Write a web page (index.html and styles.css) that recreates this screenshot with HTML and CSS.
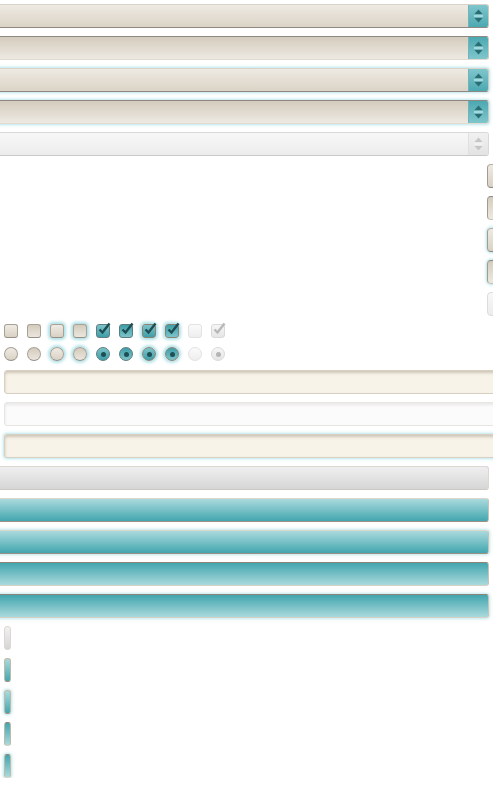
FILE: index.html
```html
<!DOCTYPE html>
<html>
<head>
<meta charset="utf-8">
<link rel="stylesheet" href="styles.css">
</head>
<body>
<div class="page">
  <div class="select"><span class="arrow"><svg width="19" height="22" viewBox="0 0 19 22"><path d="M5.5 9 L9.5 4.5 L13.5 9 Z" /><rect x="5" y="10.5" width="9" height="1" fill="#e9f6f7" stroke="none"/><path d="M5.5 13 L9.5 17.5 L13.5 13 Z"/></svg></span></div>
  <div class="select active"><span class="arrow"><svg width="19" height="22" viewBox="0 0 19 22"><path d="M5.5 9 L9.5 4.5 L13.5 9 Z" /><rect x="5" y="10.5" width="9" height="1" fill="#e9f6f7" stroke="none"/><path d="M5.5 13 L9.5 17.5 L13.5 13 Z"/></svg></span></div>
  <div class="select focus"><span class="arrow"><svg width="19" height="22" viewBox="0 0 19 22"><path d="M5.5 9 L9.5 4.5 L13.5 9 Z" /><rect x="5" y="10.5" width="9" height="1" fill="#e9f6f7" stroke="none"/><path d="M5.5 13 L9.5 17.5 L13.5 13 Z"/></svg></span></div>
  <div class="select active focus"><span class="arrow"><svg width="19" height="22" viewBox="0 0 19 22"><path d="M5.5 9 L9.5 4.5 L13.5 9 Z" /><rect x="5" y="10.5" width="9" height="1" fill="#e9f6f7" stroke="none"/><path d="M5.5 13 L9.5 17.5 L13.5 13 Z"/></svg></span></div>
  <div class="select disabled"><span class="arrow"><svg width="19" height="22" viewBox="0 0 19 22"><path d="M5.5 9 L9.5 4.5 L13.5 9 Z" /><rect x="5" y="10.5" width="9" height="1" fill="#fafafa" stroke="none"/><path d="M5.5 13 L9.5 17.5 L13.5 13 Z"/></svg></span></div>

  <div class="rbtn"></div>
  <div class="rbtn active"></div>
  <div class="rbtn focus"></div>
  <div class="rbtn active focus"></div>
  <div class="rbtn disabled"></div>

  <div class="checks">
    <span class="cb"></span>
    <span class="cb active"></span>
    <span class="cb focus"></span>
    <span class="cb active focus"></span>
    <span class="cb on"><svg width="14" height="14" viewBox="0 0 14 14"><path d="M2.5 6.5 L5.5 9.5 L12.5 0.5"/></svg></span>
    <span class="cb on active"><svg width="14" height="14" viewBox="0 0 14 14"><path d="M2.5 6.5 L5.5 9.5 L12.5 0.5"/></svg></span>
    <span class="cb on focus"><svg width="14" height="14" viewBox="0 0 14 14"><path d="M2.5 6.5 L5.5 9.5 L12.5 0.5"/></svg></span>
    <span class="cb on active focus"><svg width="14" height="14" viewBox="0 0 14 14"><path d="M2.5 6.5 L5.5 9.5 L12.5 0.5"/></svg></span>
    <span class="cb disabled"></span>
    <span class="cb disabled on"><svg width="14" height="14" viewBox="0 0 14 14"><path d="M2.5 6.5 L5.5 9.5 L12.5 0.5"/></svg></span>
  </div>
  <div class="checks radios">
    <span class="rd"></span>
    <span class="rd active"></span>
    <span class="rd focus"></span>
    <span class="rd active focus"></span>
    <span class="rd on"><i></i></span>
    <span class="rd on active"><i></i></span>
    <span class="rd on focus"><i></i></span>
    <span class="rd on active focus"><i></i></span>
    <span class="rd disabled"></span>
    <span class="rd disabled on"><i></i></span>
  </div>

  <div class="input"></div>
  <div class="input disabled"></div>
  <div class="input focus"></div>

  <div class="btn gray"></div>
  <div class="btn"></div>
  <div class="btn focus"></div>
  <div class="btn active"></div>
  <div class="btn active focus"></div>

  <div class="sbtn gray"></div>
  <div class="sbtn"></div>
  <div class="sbtn focus"></div>
  <div class="sbtn active"></div>
  <div class="sbtn active focus"></div>
</div>
</body>
</html>
```

FILE: styles.css
```css
html, body {
  margin: 0;
  padding: 0;
  background: #ffffff;
  overflow: hidden;
  font-family: "Liberation Sans", Arial, sans-serif;
}

.page {
  display: flex;
  flex-direction: column;
  gap: 8px;
  padding-top: 4px;
  width: 493px;
}

/* ---------- selects ---------- */
.select {
  box-sizing: border-box;
  display: flex;
  justify-content: flex-end;
  height: 24px;
  width: 499px;
  margin-left: -10px;
  border: 1px solid #cfc8bc;
  border-top-color: #d8d2c8;
  border-bottom-color: #8d8882;
  border-radius: 3px;
  background: linear-gradient(#eeeae3, #dbd3c6);
  overflow: hidden;
  flex: none;
}
.select.active {
  border-top-color: #8d8882;
  border-bottom-color: #e0dad0;
  background: linear-gradient(#d4ccbd, #ede9e2);
}
.select.focus {
  box-shadow: 0 0 3px 1px rgba(130, 208, 218, 0.55);
}
.select.disabled {
  border-color: #d9d9d9;
  border-bottom-color: #c9c9c9;
  background: linear-gradient(#f7f7f7, #ececec);
}
.arrow {
  width: 19px;
  height: 22px;
  display: block;
  background: linear-gradient(#7fc6cc, #4ca8b1);
  border-left: 1px solid #6fb5bb;
}
.arrow svg { display: block; fill: #2c6d73; }
.select.active .arrow { background: linear-gradient(#4ca8b1, #7fc6cc); }
.select.disabled .arrow {
  background: linear-gradient(#f1f1f1, #e3e3e3);
  border-left-color: #e0e0e0;
}
.select.disabled .arrow svg { fill: #c6c6c6; }

/* ---------- right-edge buttons ---------- */
.rbtn {
  box-sizing: border-box;
  height: 24px;
  width: 30px;
  margin-left: 487px;
  border: 1px solid #a39c91;
  border-top-color: #b5aea3;
  border-bottom-color: #8d8882;
  border-radius: 4px;
  background: linear-gradient(#eeeae3, #d9d1c4);
  flex: none;
}
.rbtn.active {
  border-top-color: #8d8882;
  border-bottom-color: #c8c1b6;
  background: linear-gradient(#d4ccbd, #ede9e2);
}
.rbtn.focus { box-shadow: 0 0 3px 1px rgba(130, 208, 218, 0.6); }
.rbtn.disabled {
  border-color: #dcdcdc;
  background: linear-gradient(#f8f8f8, #ececec);
}

/* ---------- checkboxes & radios ---------- */
.checks {
  display: flex;
  gap: 9px;
  padding-left: 4px;
  height: 14px;
  flex: none;
}
.radios { margin-top: 1px; margin-bottom: 1px; }
.cb, .rd {
  position: relative;
  box-sizing: border-box;
  width: 14px;
  height: 14px;
  border: 1px solid #a8a196;
  border-bottom-color: #958f86;
  border-radius: 3px;
  background: linear-gradient(#efebe4, #d9d1c4);
  display: flex;
  align-items: center;
  justify-content: center;
  flex: none;
}
.rd { border-radius: 50%; }
.cb.active, .rd.active {
  background: linear-gradient(#d3cbbc, #ebe6de);
}
.cb.focus, .rd.focus {
  box-shadow: 0 0 3px 2px rgba(120, 205, 215, 0.6);
}
.cb.on, .rd.on {
  border-color: #5d7d80;
  background: linear-gradient(#7cc3c9, #3f9ea7);
}
.cb.on.active, .rd.on.active {
  background: linear-gradient(#3f9ea7, #7cc3c9);
}
.cb.on.focus, .rd.on.focus { border-color: #8a8276; }
.cb svg {
  position: absolute;
  left: 0;
  top: -2px;
  fill: none;
  stroke: #1d4d53;
  stroke-width: 2.4;
  stroke-linejoin: miter;
  overflow: visible;
}
.rd i {
  display: block;
  width: 5px;
  height: 5px;
  border-radius: 50%;
  background: #1d4f55;
}
.cb.disabled, .rd.disabled {
  border-color: #e2e2e2;
  background: linear-gradient(#fafafa, #eeeeee);
  box-shadow: none;
}
.cb.disabled.on, .rd.disabled.on {
  border-color: #d9d9d9;
  background: linear-gradient(#f6f6f6, #e6e6e6);
}
.cb.disabled svg { stroke: #b8b8b8; }
.rd.disabled i { background: #b5b5b5; }

/* ---------- text inputs ---------- */
.input {
  box-sizing: border-box;
  height: 24px;
  width: 500px;
  margin-left: 4px;
  border: 1px solid #d8d0c3;
  border-radius: 3px;
  background: #f8f3e9;
  box-shadow: inset 0 2px 3px rgba(130, 115, 90, 0.35);
  flex: none;
}
.input.disabled {
  border-color: #e9e6e1;
  background: #fbfbfb;
  box-shadow: inset 0 2px 3px rgba(150, 150, 150, 0.18);
}
.input.focus {
  box-shadow: inset 0 2px 3px rgba(130, 115, 90, 0.35), 0 0 3px 1px rgba(130, 208, 218, 0.55);
}

/* ---------- buttons ---------- */
.btn {
  box-sizing: border-box;
  height: 24px;
  width: 499px;
  margin-left: -10px;
  border: 1px solid #ccc2b1;
  border-top-color: #ddd6ca;
  border-bottom-color: #9a9083;
  border-radius: 3px;
  background: linear-gradient(#aadadd, #43a6af);
  flex: none;
}
.btn.gray {
  border-color: #dcd8d1;
  border-bottom-color: #cdc9c2;
  background: linear-gradient(#efefef, #d6d6d6);
}
.btn.active {
  border-top-color: #8e8579;
  border-bottom-color: #d7d0c4;
  background: linear-gradient(#42a5ae, #aadadd);
}
.btn.focus { box-shadow: 0 0 3px 1px rgba(130, 208, 218, 0.5); }

.sbtn {
  box-sizing: border-box;
  height: 24px;
  width: 7px;
  margin-left: 4px;
  border: 1px solid #c4b9a7;
  border-bottom-color: #a09585;
  border-radius: 3px;
  background: linear-gradient(#aadadd, #43a6af);
  flex: none;
}
.sbtn.gray {
  border-color: #dcd8d1;
  background: linear-gradient(#f1f1f1, #d5d5d5);
}
.sbtn.active {
  border-top-color: #8e8579;
  border-bottom-color: #d7d0c4;
  background: linear-gradient(#42a5ae, #aadadd);
}
.sbtn.focus { box-shadow: 0 0 3px 1px rgba(130, 208, 218, 0.55); }
```
